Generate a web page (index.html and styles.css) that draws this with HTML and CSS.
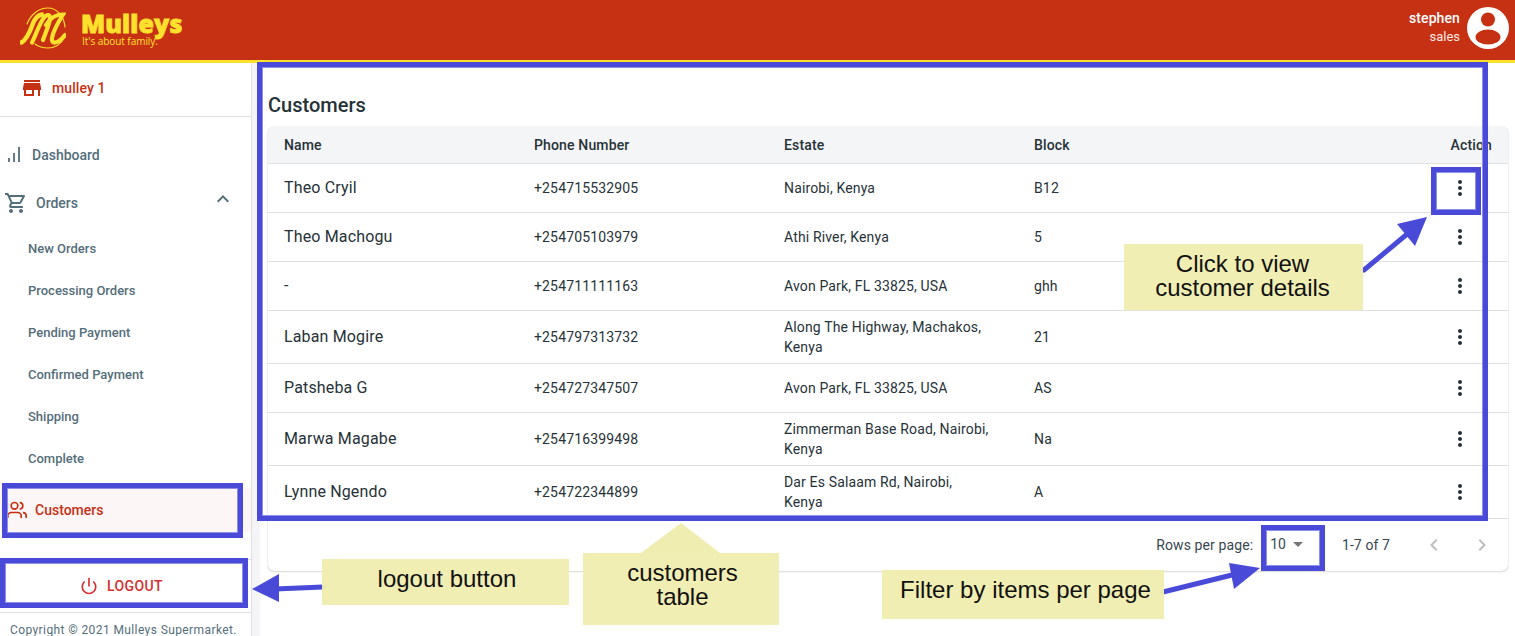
FILE: index.html
```html
<!DOCTYPE html>
<html lang="en">
<head>
<meta charset="utf-8">
<title>Mulleys - Customers</title>
<link rel="stylesheet" href="styles.css">
</head>
<body>
<div class="page">
  <header class="topbar">
    <div class="brand">
      <svg class="emblem" width="46" height="44" viewBox="0 0 46 44" fill="none" stroke="#fde12d" stroke-linecap="round">
        <path d="M7 17C11 7 19 1 28 1C37 1 44 9 45 20" stroke-width="1.200"/>
        <path d="M15 37C19 40 24 41 28 41C35 41 41 37 45 30" stroke-width="1.200"/>
        <path d="M1.500 35.500C6 33 9 27 12 19C13.500 14 16 8.500 22 7.500" stroke-width="4.500"/>
        <path d="M12 35.500C15 30 18 20 23 12C25 8 29 7 30 10C31 14 25 27 23 33" stroke-width="4.200"/>
        <path d="M26 18C30 11 35 7.500 43 7.500C39 14 33 24 32 31C31 37 37 38 45 28" stroke-width="4.200"/>
      </svg>
      <div class="brand-text">
        <div class="brand-name">Mulleys</div>
        <div class="brand-tag">It's about family.</div>
      </div>
    </div>
    <div class="user">
      <div class="user-text">
        <div class="user-name">stephen</div>
        <div class="user-role">sales</div>
      </div>
      <svg class="avatar" width="42" height="42" viewBox="0 0 42 42">
        <circle cx="21" cy="21" r="21" fill="#fff"/>
        <circle cx="21" cy="12.500" r="7" fill="#c63114"/>
        <ellipse cx="21" cy="30" rx="12.500" ry="7.500" fill="#c63114"/>
      </svg>
    </div>
  </header>

  <div class="body-row">
    <aside class="sidebar">
      <div class="shop">
        <svg width="24" height="24" viewBox="0 0 24 24" fill="#c63114"><path d="M20 4H4v2h16V4zm1 10v-2l-1-5H4l-1 5v2h1v6h10v-6h4v6h2v-6h1zm-9 4H6v-4h6v4z"/></svg>
        <span>mulley 1</span>
      </div>
      <nav class="nav">
        <a class="nav-item nav-dash">
          <svg width="16" height="16" viewBox="0 0 16 16" fill="none" stroke="#546e7a" stroke-width="1.800"><path d="M1 15v-4M6 15V6M11 15V0"/></svg>
          <span>Dashboard</span>
        </a>
        <a class="nav-item nav-orders">
          <svg width="24" height="24" viewBox="0 0 24 24" fill="#546e7a"><path d="M15.55 13c.75 0 1.41-.41 1.75-1.03l3.58-6.49c.37-.66-.11-1.48-.87-1.48H5.21l-.94-2H1v2h2l3.6 7.59-1.35 2.44C4.52 15.37 5.48 17 7 17h12v-2H7l1.1-2h7.45zM6.16 6h12.15l-2.76 5H8.53L6.16 6zM7 18c-1.1 0-1.99.9-1.99 2S5.9 22 7 22s2-.9 2-2-.9-2-2-2zm10 0c-1.1 0-1.99.9-1.99 2s.89 2 1.990 2 2-.9 2-2-.9-2-2-2z"/></svg>
          <span>Orders</span>
          <svg class="chev" width="24" height="24" viewBox="0 0 24 24" fill="#546e7a"><path d="M12 8l-6 6 1.410 1.410L12 10.830l4.590 4.580L18 14z"/></svg>
        </a>
        <ul class="subnav">
          <li>New Orders</li>
          <li>Processing Orders</li>
          <li>Pending Payment</li>
          <li>Confirmed Payment</li>
          <li>Shipping</li>
          <li>Complete</li>
        </ul>
        <a class="nav-item nav-customers">
          <svg width="20" height="20" viewBox="0 0 24 24" fill="none" stroke="#c63114" stroke-width="2" stroke-linecap="round" stroke-linejoin="round"><path d="M17 21v-2a4 4 0 0 0-4-4H5a4 4 0 0 0-4 4v2"/><circle cx="9" cy="7" r="4"/><path d="M23 21v-2a4 4 0 0 0-3-3.870"/><path d="M16 3.130a4 4 0 0 1 0 7.750"/></svg>
          <span>Customers</span>
        </a>
      </nav>
      <div class="logout-wrap">
        <button class="logout">
          <svg width="18" height="18" viewBox="0 0 24 24" fill="none" stroke="#d32f2f" stroke-width="2.200" stroke-linecap="round" stroke-linejoin="round"><path d="M18.360 6.640a9 9 0 1 1-12.730 0"/><path d="M12 2v10"/></svg>
          <span>LOGOUT</span>
        </button>
      </div>
      <div class="copyright">Copyright © 2021 Mulleys Supermarket.</div>
    </aside>
    <div class="gutter"></div>
    <main class="main">
      <h1 class="title">Customers</h1>
      <section class="card">
        <table class="table">
          <thead>
            <tr><th>Name</th><th>Phone Number</th><th>Estate</th><th>Block</th><th class="act">Action</th></tr>
          </thead>
          <tbody>
            <tr><td class="name">Theo Cryil</td><td>+254715532905</td><td class="estate">Nairobi, Kenya</td><td>B12</td><td class="act"><svg class="kebab" width="24" height="24" viewBox="0 0 24 24"><path d="M12 8c1.100 0 2-.9 2-2s-.9-2-2-2-2 .9-2 2 .9 2 2 2zm0 2c-1.100 0-2 .9-2 2s.9 2 2 2 2-.9 2-2-.9-2-2-2zm0 6c-1.100 0-2 .9-2 2s.9 2 2 2 2-.9 2-2-.9-2-2-2z"/></svg></td></tr>
            <tr><td class="name">Theo Machogu</td><td>+254705103979</td><td class="estate">Athi River, Kenya</td><td>5</td><td class="act"><svg class="kebab" width="24" height="24" viewBox="0 0 24 24"><path d="M12 8c1.100 0 2-.9 2-2s-.9-2-2-2-2 .9-2 2 .9 2 2 2zm0 2c-1.100 0-2 .9-2 2s.9 2 2 2 2-.9 2-2-.9-2-2-2zm0 6c-1.100 0-2 .9-2 2s.9 2 2 2 2-.9 2-2-.9-2-2-2z"/></svg></td></tr>
            <tr><td class="name">-</td><td>+254711111163</td><td class="estate">Avon Park, FL 33825, USA</td><td>ghh</td><td class="act"><svg class="kebab" width="24" height="24" viewBox="0 0 24 24"><path d="M12 8c1.100 0 2-.9 2-2s-.9-2-2-2-2 .9-2 2 .9 2 2 2zm0 2c-1.100 0-2 .9-2 2s.9 2 2 2 2-.9 2-2-.9-2-2-2zm0 6c-1.100 0-2 .9-2 2s.9 2 2 2 2-.9 2-2-.9-2-2-2z"/></svg></td></tr>
            <tr><td class="name">Laban Mogire</td><td>+254797313732</td><td class="estate">Along The Highway, Machakos, Kenya</td><td>21</td><td class="act"><svg class="kebab" width="24" height="24" viewBox="0 0 24 24"><path d="M12 8c1.100 0 2-.9 2-2s-.9-2-2-2-2 .9-2 2 .9 2 2 2zm0 2c-1.100 0-2 .9-2 2s.9 2 2 2 2-.9 2-2-.9-2-2-2zm0 6c-1.100 0-2 .9-2 2s.9 2 2 2 2-.9 2-2-.9-2-2-2z"/></svg></td></tr>
            <tr><td class="name">Patsheba G</td><td>+254727347507</td><td class="estate">Avon Park, FL 33825, USA</td><td>AS</td><td class="act"><svg class="kebab" width="24" height="24" viewBox="0 0 24 24"><path d="M12 8c1.100 0 2-.9 2-2s-.9-2-2-2-2 .9-2 2 .9 2 2 2zm0 2c-1.100 0-2 .9-2 2s.9 2 2 2 2-.9 2-2-.9-2-2-2zm0 6c-1.100 0-2 .9-2 2s.9 2 2 2 2-.9 2-2-.9-2-2-2z"/></svg></td></tr>
            <tr><td class="name">Marwa Magabe</td><td>+254716399498</td><td class="estate">Zimmerman Base Road, Nairobi, Kenya</td><td>Na</td><td class="act"><svg class="kebab" width="24" height="24" viewBox="0 0 24 24"><path d="M12 8c1.100 0 2-.9 2-2s-.9-2-2-2-2 .9-2 2 .9 2 2 2zm0 2c-1.100 0-2 .9-2 2s.9 2 2 2 2-.9 2-2-.9-2-2-2zm0 6c-1.100 0-2 .9-2 2s.9 2 2 2 2-.9 2-2-.9-2-2-2z"/></svg></td></tr>
            <tr><td class="name">Lynne Ngendo</td><td>+254722344899</td><td class="estate">Dar Es Salaam Rd, Nairobi, Kenya</td><td>A</td><td class="act"><svg class="kebab" width="24" height="24" viewBox="0 0 24 24"><path d="M12 8c1.100 0 2-.9 2-2s-.9-2-2-2-2 .9-2 2 .9 2 2 2zm0 2c-1.100 0-2 .9-2 2s.9 2 2 2 2-.9 2-2-.9-2-2-2zm0 6c-1.100 0-2 .9-2 2s.9 2 2 2 2-.9 2-2-.9-2-2-2z"/></svg></td></tr>
          </tbody>
        </table>
        <footer class="pager">
          <span class="rows-label">Rows per page:</span>
          <span class="rows-select">10<svg width="24" height="24" viewBox="0 0 24 24" fill="#757575"><path d="M7 10l5 5 5-5z"/></svg></span>
          <span class="range">1-7 of 7</span>
          <svg class="page-btn" width="24" height="24" viewBox="0 0 24 24" fill="#bdbdbd"><path d="M15.410 7.410L14 6l-6 6 6 6 1.410-1.410L10.830 12z"/></svg>
          <svg class="page-btn" width="24" height="24" viewBox="0 0 24 24" fill="#bdbdbd"><path d="M10 6L8.590 7.410 13.170 12l-4.580 4.590L10 18l6-6z"/></svg>
        </footer>
      </section>
    </main>
  </div>

  <div class="mark mark-table"></div>
  <div class="mark mark-action"></div>
  <div class="mark mark-customers"></div>
  <div class="mark mark-logout"></div>
  <div class="mark mark-rows"></div>

  <svg class="arrows" width="1515" height="636" viewBox="0 0 1515 636">
    <polygon class="note-fill" points="641,553 681,523 720,553"/>
    <path class="arrow-line" d="M1364 270L1406 235M323 587L275 589M1163 592L1236 574"/>
    <polygon class="arrow-head" points="1427,217 1397,224 1415,246"/>
    <polygon class="arrow-head" points="252,589 279,574 279,602"/>
    <polygon class="arrow-head" points="1260,568 1229,563 1234,589"/>
  </svg>

  <div class="note note-click">Click to view<br>customer details</div>
  <div class="note note-logout">logout button</div>
  <div class="note note-table">customers<br>table</div>
  <div class="note note-filter">Filter by items per page</div>
</div>
</body>
</html>
```

FILE: styles.css
```css
* { box-sizing: border-box; }
html, body { margin: 0; padding: 0; }
body {
  font-family: Roboto, "Liberation Sans", sans-serif;
  color: #263238;
  background: #fff;
}
.page {
  position: relative;
  width: 1515px;
  height: 636px;
  overflow: hidden;
  display: flex;
  flex-direction: column;
}

/* Top bar */
.topbar {
  height: 63px;
  flex: none;
  background: #c63114;
  border-bottom: 3px solid #fde12d;
  display: flex;
  align-items: center;
  justify-content: space-between;
  padding: 0 6px 0 20px;
}
.brand { display: flex; align-items: flex-start; gap: 15px; height: 60px; padding-top: 7px; }
.emblem { flex: none; }
.brand-text { color: #fde12d; padding-top: 3px; }
.brand-name {
  font-family: "Open Sans", sans-serif;
  font-weight: 800;
  font-size: 25px;
  line-height: 26px;
  letter-spacing: 0.1px;
  -webkit-text-stroke: 0.8px #fde12d;
}
.brand-tag {
  font-family: "Open Sans", sans-serif;
  font-weight: 400;
  font-size: 10px;
  line-height: 10px;
  letter-spacing: -0.05px;
  padding-left: 1px;
}
.user { display: flex; align-items: center; gap: 7px; }
.user-text { text-align: right; color: #fff; margin-bottom: 6px; }
.user-name { font-size: 14px; font-weight: 500; line-height: 20px; letter-spacing: 0.1px; }
.user-role { font-size: 13px; line-height: 18px; color: #f7e9e6; }
.avatar { display: block; margin-bottom: 4px; }

/* Frame */
.body-row { flex: 1; display: flex; min-height: 0; }
.sidebar {
  width: 252px;
  flex: none;
  border-right: 1px solid #e0e0e0;
  display: flex;
  flex-direction: column;
}
.gutter { width: 8px; flex: none; background: #f5f5f8; }
.main { flex: 1; padding: 0 7px 0 8px; min-width: 0; }

/* Sidebar */
.shop {
  height: 54px;
  flex: none;
  border-bottom: 1px solid #e0e0e0;
  display: flex;
  align-items: center;
  gap: 8px;
  padding: 0 0 3px 20px;
  color: #c63114;
  font-size: 14px;
  font-weight: 500;
  letter-spacing: 0.1px;
}
.nav { padding-top: 14px; flex: none; }
.nav-item {
  display: flex;
  align-items: center;
  font-size: 14px;
  font-weight: 500;
  color: #546e7a;
}
.nav-dash { height: 48px; padding-left: 8px; gap: 8px; }
.nav-orders { height: 48px; padding-left: 4px; gap: 8px; }
.chev { margin-left: auto; margin-right: 16px; margin-top: -9px; }
.subnav { list-style: none; margin: 0; padding: 0; }
.subnav li {
  height: 42px;
  display: flex;
  align-items: center;
  padding-left: 28px;
  font-size: 13px;
  font-weight: 500;
  color: #546e7a;
}
.nav-customers {
  height: 44px;
  margin-top: 9px;
  padding-left: 7px;
  gap: 8px;
  background: #fdf6f6;
  color: #c63114;
}
.logout-wrap {
  height: 54px;
  margin-top: 27px;
  flex: none;
  border-top: 1px solid #e0e0e0;
  border-bottom: 1px solid #e0e0e0;
  padding: 4px 0 3px;
}
.logout {
  width: 100%;
  height: 44px;
  border: 0;
  padding: 0 8px 0 0;
  background: #fff;
  display: flex;
  align-items: center;
  justify-content: center;
  gap: 9px;
  font: 500 14px Roboto, sans-serif;
  letter-spacing: 0.4px;
  color: #d32f2f;
}
.copyright {
  padding: 10px 0 0 10px;
  font-size: 12px;
  letter-spacing: 0.4px;
  line-height: 14px;
  white-space: nowrap;
  color: #546e7a;
}

/* Main */
.title {
  margin: 0;
  padding-top: 30px;
  height: 64px;
  font-size: 20px;
  font-weight: 500;
  line-height: 24px;
  color: #263238;
}
.card {
  width: 1240px;
  border-radius: 6px;
  box-shadow: 0 0 1px rgba(0,0,0,.35), 0 1px 2px rgba(0,0,0,.12);
  background: #fff;
}
.table { width: 100%; border-collapse: collapse; table-layout: fixed; letter-spacing: 0.15px; }
.table th {
  height: 36px;
  background: #f4f5f7;
  border-bottom: 1px solid #e0e0e0;
  text-align: left;
  padding: 0 16px;
  font-size: 14px;
  font-weight: 500;
  color: #263238;
  width: 250px;
}
.table th:first-child { border-top-left-radius: 6px; }
.table th:last-child { border-top-right-radius: 6px; width: auto; }
.table td {
  height: 49px;
  padding: 6px 16px;
  border-bottom: 1px solid #e0e0e0;
  font-size: 14px;
  line-height: 20px;
  color: #263238;
}
.table td.name { font-size: 16px; }
.table td.estate { padding-right: 28px; }
.table .act { text-align: right; }
.kebab { display: block; margin-left: auto; margin-right: 20px; fill: #263238; }

.pager {
  height: 52px;
  display: flex;
  align-items: center;
  padding: 0 14px 0 0;
  font-size: 14px;
  color: #37474f;
}
.rows-label { margin-left: auto; letter-spacing: 0.1px; }
.rows-select { display: flex; align-items: center; margin-left: 17px; margin-top: -2px; }
.range { margin-left: 32px; margin-right: 32px; letter-spacing: 0.1px; }
.page-btn + .page-btn { margin-left: 24px; }

/* Annotation layer */
.mark {
  position: absolute;
  border: 5px solid #4a4ad8;
  outline: 1px solid #8f8fea;
  outline-offset: -6px;
}
.mark-table { left: 257px; top: 62px; width: 1231px; height: 459px; }
.mark-action { left: 1431px; top: 167px; width: 50px; height: 48px; }
.mark-customers { left: 2px; top: 483px; width: 241px; height: 55px; }
.mark-logout { left: 0; top: 558px; width: 248px; height: 50px; }
.mark-rows { left: 1261px; top: 525px; width: 64px; height: 46px; }

.arrows { position: absolute; left: 0; top: 0; pointer-events: none; }
.arrow-line { fill: none; stroke: #4a4ad8; stroke-width: 5; stroke-linecap: round; }
.arrow-head { fill: #4a4ad8; }
.note-fill { fill: #f0edb0; }

.note {
  position: absolute;
  background: rgba(240, 237, 176, .96);
  color: #111;
  font-family: "Liberation Sans", Arial, sans-serif;
  font-size: 24px;
  line-height: 24px;
  text-align: center;
  display: flex;
  align-items: center;
  justify-content: center;
}
.note-click { left: 1124px; top: 244px; width: 239px; height: 66px; padding: 0 2px 2px 0; }
.note-logout { left: 322px; top: 559px; width: 247px; height: 46px; padding: 0 0 7px 3px; }
.note-table { left: 583px; top: 553px; width: 196px; height: 72px; padding: 0 0 8px 3px; }
.note-filter { left: 882px; top: 570px; width: 282px; height: 49px; padding: 0 0 9px 5px; }
```
